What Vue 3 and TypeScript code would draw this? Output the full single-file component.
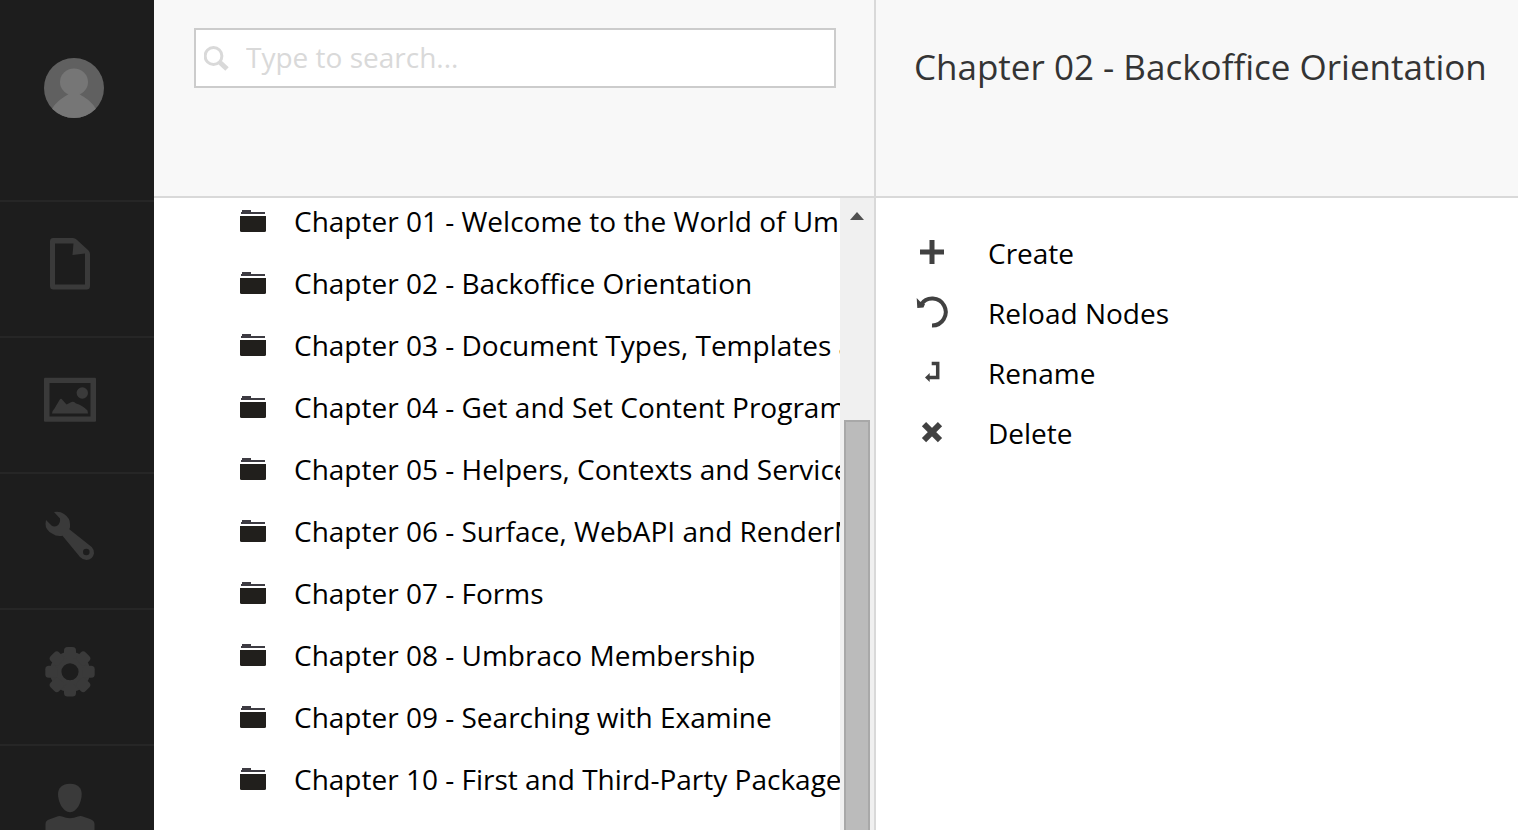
<script setup lang="ts">
import { ref } from 'vue'

const query = ref('')

const chapters: string[] = [
  'Chapter 01 - Welcome to the World of Umbraco',
  'Chapter 02 - Backoffice Orientation',
  'Chapter 03 - Document Types, Templates and Macros',
  'Chapter 04 - Get and Set Content Programmatically',
  'Chapter 05 - Helpers, Contexts and Services',
  'Chapter 06 - Surface, WebAPI and RenderMvcControllers',
  'Chapter 07 - Forms',
  'Chapter 08 - Umbraco Membership',
  'Chapter 09 - Searching with Examine',
  'Chapter 10 - First and Third-Party Packages',
]

const sections: string[] = ['Content', 'Media', 'Settings', 'Developer', 'Users']
const actions: string[] = ['Create', 'Reload Nodes', 'Rename', 'Delete']
const teeth: number[] = [0, 45, 90, 135, 180, 225, 270, 315]
</script>

<template>
  <div class="shell">
    <nav class="sections" aria-label="Sections">
      <button class="avatar" type="button" aria-label="Profile">
        <svg viewBox="0 0 60 60" aria-hidden="true">
          <defs>
            <clipPath id="avatar-clip"><circle cx="30" cy="30" r="30" /></clipPath>
          </defs>
          <g clip-path="url(#avatar-clip)">
            <rect width="60" height="60" fill="#606060" />
            <ellipse cx="30" cy="24" rx="14" ry="13.5" fill="#767676" />
            <path d="M25 33h10c0 4 2 4 5 6c6 4 9 7 12 12v12H8V51c3-5 6-8 12-12c3-2 5-2 5-6z" fill="#767676" />
          </g>
        </svg>
      </button>
      <a v-for="section in sections" :key="section" class="section" href="#" :aria-label="section">
        <svg viewBox="0 0 52 52" fill="currentColor" aria-hidden="true">
          <path
            v-if="section === 'Content'"
            fill-rule="evenodd"
            d="M9 0H29Q31 0 32.500 1.500L44.500 12.500Q46 14 46 16V48Q46 51.500 42.500 51.500H9.500Q6 51.500 6 48V3.500Q6 0 9 0ZM11 5.500V46.500H41V15.500L28.500 17L29.500 5.500Z"
          />
          <g v-else-if="section === 'Media'">
            <path fill-rule="evenodd" d="M1 3.700H51Q52 3.700 52 5V46.500Q52 47.700 51 47.700H1Q0 47.700 0 46.500V5Q0 3.700 1 3.700ZM5.500 9V42.500H46.500V9Z" />
            <circle cx="38.300" cy="19" r="5.700" />
            <path d="M8 39.500Q8 37 10.500 34.500L15.500 26Q17 23.500 18.500 26L22.500 30.500L27.500 28Q30 27 32 29.500Q38 31 43.500 36.500L44 39.500Z" />
          </g>
          <path
            v-else-if="section === 'Settings'"
            fill-rule="evenodd"
            d="M10 2Q16 1 20 4Q26 8 26 14Q26.500 17.500 25.300 19.300L47.700 37Q50.500 40 50 43.500Q48.500 50 42.500 50Q39 50 36 47L18.500 25.700Q13 27 8 23.500Q1.500 20 1.500 14L2 10L7.500 15.500Q10.500 17.500 13.500 15.500Q16.500 13 16 8.500ZM42.300 38.700A3.300 3.300 0 1 0 42.300 45.300A3.300 3.300 0 1 0 42.300 38.700Z"
          />
          <g v-else-if="section === 'Developer'">
            <circle cx="26" cy="25.700" r="14.300" fill="none" stroke="currentColor" stroke-width="11.500" />
            <rect
              v-for="angle in teeth"
              :key="angle"
              x="20"
              y="1"
              width="12"
              height="12"
              rx="3.500"
              :transform="`rotate(${angle} 26 25.700)`"
            />
          </g>
          <g v-else>
            <path d="M26 1.700C34 1.700 37.700 6 37.700 12C37.700 20 33 30.300 26 30.300C19 30.300 14 20 14 12C14 6 18 1.700 26 1.700Z" />
            <path d="M1.500 52V42Q1.500 38.500 5 37.500L14 34.200Q16 33.500 18 34.500Q26 38 34 34.500Q36 33.500 38 34.200L46 37Q50.500 38.500 50.500 42V52Z" />
          </g>
        </svg>
      </a>
    </nav>

    <section class="tree" aria-label="Content tree">
      <header class="bar tree-bar">
        <label class="search">
          <svg viewBox="1 -1 26 26" fill="none" stroke="currentColor" aria-hidden="true">
            <circle cx="10.500" cy="10" r="8.400" stroke-width="3" />
            <path d="M17 16.500L24 23" stroke-width="5" />
          </svg>
          <input v-model="query" type="text" placeholder="Type to search..." aria-label="Search" />
        </label>
      </header>
      <div class="tree-body">
        <ul class="nodes">
          <li v-for="chapter in chapters" :key="chapter">
            <a class="node" href="#">
              <svg viewBox="0 0 26 24" aria-hidden="true">
                <path d="M1 5V3H2V1H11V3H25V5Z" fill="#3d3b42" />
                <path d="M0 7H26V21.500Q26 23 24.500 23H1.500Q0 23 0 21.500Z" fill="#211f1c" />
              </svg>
              <span>{{ chapter }}</span>
            </a>
          </li>
        </ul>
        <div class="scrollbar" aria-hidden="true">
          <svg class="scroll-up" viewBox="0 0 14 8"><path d="M7 0L14 8H0Z" fill="#505050" /></svg>
          <div class="thumb"></div>
        </div>
      </div>
    </section>

    <main class="panel">
      <header class="bar panel-bar">
        <h1>Chapter 02 - Backoffice Orientation</h1>
      </header>
      <ul class="actions">
        <li v-for="action in actions" :key="action">
          <button class="action" type="button">
            <svg viewBox="0 -1 36 36" fill="none" stroke="currentColor" aria-hidden="true">
              <path v-if="action === 'Create'" d="M18 4V28M6 16H30" stroke-width="5" />
              <g v-else-if="action === 'Reload Nodes'">
                <path d="M7 8.500A13.500 13.500 0 1 1 18 29.500" stroke-width="4" />
                <path d="M2.700 2L6 5.500L11 8L9.500 11.500L3.300 12Z" fill="currentColor" stroke="none" />
              </g>
              <g v-else-if="action === 'Rename'">
                <path d="M17.700 7.500H23.700V21.500H14" stroke-width="3.500" />
                <path d="M11 21.500L15.700 17V26Z" fill="currentColor" stroke="none" />
              </g>
              <path v-else d="M10 8.200L26 24.200M26 8.200L10 24.200" stroke-width="6" />
            </svg>
            <span>{{ action }}</span>
          </button>
        </li>
      </ul>
    </main>
  </div>
</template>

<style>
body {
  margin: 0;
}
</style>

<style scoped>
.shell {
  display: grid;
  grid-template-columns: 154px 722px minmax(0, 1fr);
  grid-template-rows: minmax(0, 1fr);
  height: 100vh;
  overflow: hidden;
  background: #fff;
  color: #000;
  font-family: "Open Sans", "Noto Sans", sans-serif;
  font-size: 28px;
  line-height: 46px;
}

svg {
  display: block;
  flex: none;
}

ul {
  margin: 0;
  padding: 0;
  list-style: none;
}

button {
  border: 0;
  background: none;
  color: inherit;
  font: inherit;
  cursor: pointer;
}

.sections {
  display: flex;
  flex-direction: column;
  overflow: hidden;
  background: #1d1d1d;
}

.avatar {
  flex: none;
  height: 200px;
  padding: 58px 44px 82px;
}

.avatar svg {
  width: 60px;
  height: 60px;
}

.section {
  flex: none;
  box-sizing: border-box;
  height: 136px;
  padding: 36px 44px;
  border-top: 2px solid #262626;
  color: #3a3a3a;
}

.section svg {
  width: 52px;
  height: 52px;
}

.tree {
  display: flex;
  flex-direction: column;
  min-width: 0;
  border-right: 2px solid #d9d9d9;
}

.bar {
  flex: none;
  box-sizing: border-box;
  height: 198px;
  border-bottom: 2px solid #d9d9d9;
  background: #f8f8f8;
}

.tree-bar {
  padding: 28px 38px 0 40px;
}

.search {
  display: flex;
  align-items: center;
  gap: 16px;
  box-sizing: border-box;
  height: 60px;
  padding: 0 8px;
  border: 2px solid #ccc;
  background: #fff;
  color: #d9d9d9;
}

.search svg {
  width: 26px;
  height: 26px;
}

.search input {
  flex: 1;
  box-sizing: border-box;
  min-width: 0;
  height: 56px;
  padding: 0 0 2px;
  border: 0;
  outline: 0;
  background: none;
  color: #000;
  font: inherit;
}

.search input::placeholder {
  color: #d9d9d9;
  opacity: 1;
}

.tree-body {
  display: flex;
  flex: 1;
  min-height: 0;
}

.nodes {
  display: flex;
  flex: 1;
  flex-direction: column;
  gap: 16px;
  min-width: 0;
  overflow: hidden;
}

.node {
  display: flex;
  align-items: center;
  gap: 28px;
  height: 46px;
  padding-left: 86px;
  color: inherit;
  text-decoration: none;
  white-space: nowrap;
}

.node svg {
  width: 26px;
  height: 24px;
}

.scrollbar {
  display: flex;
  flex: none;
  flex-direction: column;
  align-items: center;
  gap: 200px;
  width: 34px;
  padding-top: 14px;
  box-sizing: border-box;
  background: #f0f0f0;
}

.scroll-up {
  width: 14px;
  height: 8px;
}

.thumb {
  flex: 1;
  box-sizing: border-box;
  width: 26px;
  border: 2px solid #a8a8a8;
  border-bottom: 0;
  background: #bbb;
}

.panel {
  min-width: 0;
}

.panel-bar {
  padding: 44px 24px 0 38px;
}

h1 {
  margin: 0;
  color: #343434;
  font-size: 35px;
  font-weight: 400;
  line-height: 46px;
  white-space: nowrap;
}

.actions {
  padding: 25px 0 0 38px;
}

.action {
  display: flex;
  align-items: center;
  gap: 38px;
  height: 60px;
  padding: 0;
}

.action svg {
  width: 36px;
  height: 36px;
  color: #414141;
}
</style>
